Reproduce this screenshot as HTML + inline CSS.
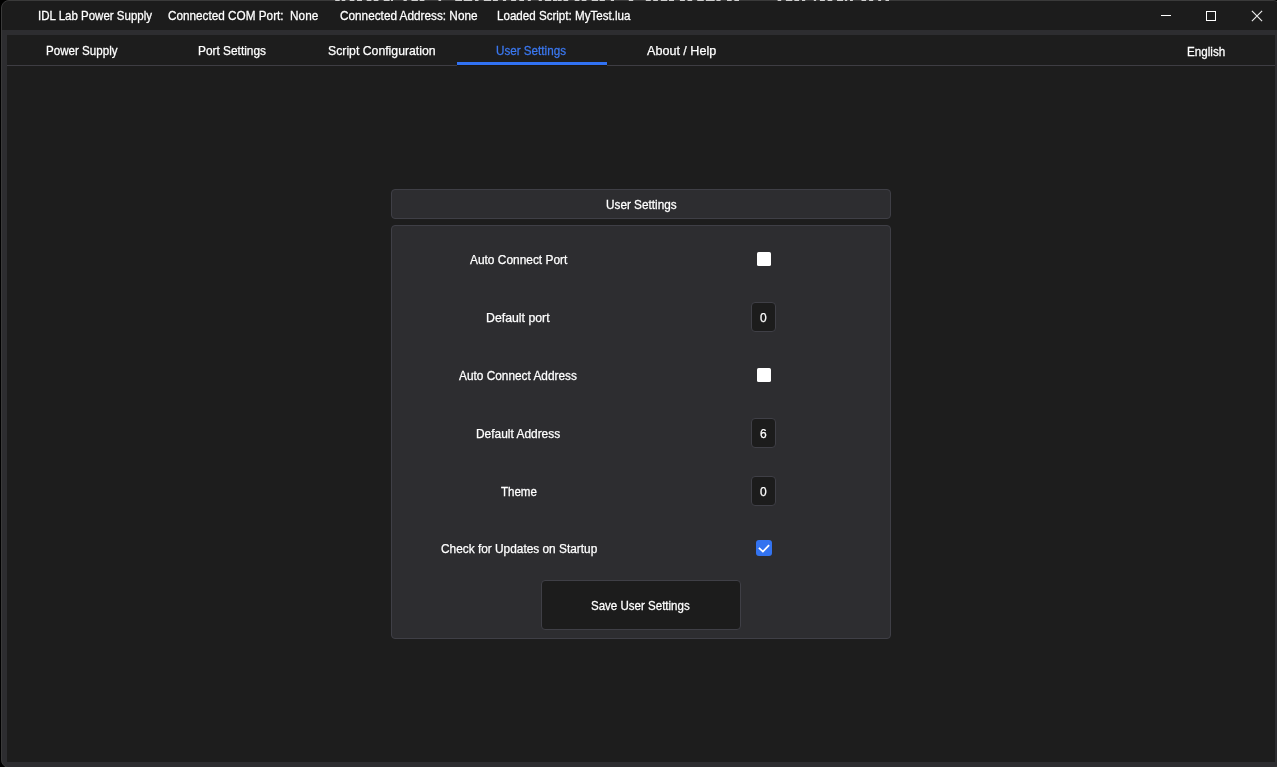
<!DOCTYPE html>
<html><head><meta charset="utf-8">
<style>
html,body{margin:0;padding:0;width:1277px;height:767px;overflow:hidden;background:#000;}
body{position:relative;font-family:"Liberation Sans",sans-serif;font-size:12px;color:#f2f2f2;}
.a{position:absolute;}
.t{position:absolute;white-space:pre;line-height:14px;height:14px;will-change:transform;transform-origin:0 11px;-webkit-text-stroke:0.25px currentColor;}
#win{left:1px;top:0;width:1280px;height:768px;box-sizing:border-box;border:1px solid #3a3a3a;border-radius:8px;background:#2d2d30;overflow:hidden;}
#title{left:0;top:0;width:1290px;height:29px;background:#1c1c1c;}
#content{left:5px;top:34px;width:1268px;height:727px;background:#1d1d1d;}
#sep{left:7px;top:65px;width:1268px;height:1px;background:#3e3d43;}
#uline{left:457px;top:62px;width:150px;height:3px;background:#3172f3;}
#uline2{left:457px;top:65px;width:150px;height:1px;background:#1a1815;}
.box{background:#2d2d30;border:1px solid #3f3f46;border-radius:4px;box-sizing:border-box;}
.inp{background:#1c1c1c;border:1px solid #3f3f46;border-radius:4px;box-sizing:border-box;}
.chk{background:#fff;border-radius:1.6px;}
</style></head><body>
<div id="win" class="a">
  <div id="title" class="a"></div>
  <div id="content" class="a"></div>
</div>
<div id="sep" class="a"></div>
<div id="uline" class="a"></div>
<div id="uline2" class="a"></div>

<svg class="a" style="left:1150px;top:0" width="127" height="30" viewBox="1150 0 127 30">
  <line x1="1161" y1="15.5" x2="1171" y2="15.5" stroke="#fff" stroke-width="1"/>
  <rect x="1206.5" y="11.5" width="9" height="9" fill="none" stroke="#fff" stroke-width="1"/>
  <path d="M1251.9 10.9 L1262.1 21.1 M1262.1 10.9 L1251.9 21.1" stroke="#fff" stroke-width="1.15" stroke-opacity="0.92"/>
</svg>

<div class="a box" style="left:391px;top:189px;width:500px;height:30px;"></div>
<div class="a box" style="left:391px;top:225px;width:500px;height:414px;"></div>

<div class="a chk" style="left:757px;top:252px;width:14px;height:14px;"></div>
<div class="a inp" style="left:751px;top:302px;width:25px;height:30px;"></div>
<div class="a chk" style="left:757px;top:368px;width:14px;height:14px;"></div>
<div class="a inp" style="left:751px;top:418px;width:25px;height:30px;"></div>
<div class="a inp" style="left:751px;top:476px;width:25px;height:30px;"></div>
<div class="a" style="left:756px;top:540px;width:16px;height:16px;background:#3373f0;border-radius:3px;"></div>
<svg class="a" style="left:756px;top:540px" width="16" height="16" viewBox="0 0 16 16"><path d="M2.9 7.9 L6.9 11.6 L13.1 5.2" fill="none" stroke="#fff" stroke-width="1.8"/></svg>
<div class="a inp" style="left:541px;top:580px;width:200px;height:50px;"></div>

<svg class="a" style="left:0;top:0" width="1277" height="2" viewBox="0 0 1277 2"><g fill="#cfcfcf"><rect x="335.2" y="0" width="4.5" height="1"/><rect x="341.7" y="0" width="3.6" height="1"/><rect x="349.7" y="0" width="4.7" height="1"/><rect x="357.0" y="0" width="5.0" height="1"/><rect x="366.7" y="0" width="4.7" height="1"/><rect x="373.7" y="0" width="4.7" height="1"/><rect x="383.7" y="0" width="5.9" height="1"/><rect x="391.0" y="0" width="2.0" height="1"/><rect x="403.5" y="0" width="3.3" height="1"/><rect x="411.5" y="0" width="6.4" height="1"/><rect x="419.7" y="0" width="4.7" height="1"/><rect x="438.5" y="0" width="2.6" height="1"/><rect x="455.2" y="0" width="6.8" height="1"/><rect x="463.7" y="0" width="8.5" height="1"/><rect x="475.0" y="0" width="3.5" height="1"/><rect x="483.8" y="0" width="7.3" height="1"/><rect x="492.9" y="0" width="5.0" height="1"/><rect x="502.9" y="0" width="3.2" height="1"/><rect x="511.1" y="0" width="5.0" height="1"/><rect x="519.3" y="0" width="4.7" height="1"/><rect x="527.8" y="0" width="3.0" height="1"/><rect x="538.7" y="0" width="3.2" height="1"/><rect x="544.9" y="0" width="6.3" height="1"/><rect x="553.0" y="0" width="4.0" height="1"/><rect x="557.6" y="0" width="4.1" height="1"/><rect x="563.5" y="0" width="4.7" height="1"/><rect x="574.7" y="0" width="4.7" height="1"/><rect x="581.7" y="0" width="4.7" height="1"/><rect x="591.7" y="0" width="6.4" height="1"/><rect x="599.6" y="0" width="5.3" height="1"/><rect x="610.8" y="0" width="3.2" height="1"/><rect x="628.8" y="0" width="4.4" height="1"/><rect x="645.8" y="0" width="5.0" height="1"/><rect x="653.2" y="0" width="4.7" height="1"/><rect x="660.8" y="0" width="6.5" height="1"/><rect x="669.0" y="0" width="5.0" height="1"/><rect x="679.9" y="0" width="5.0" height="1"/><rect x="687.5" y="0" width="4.7" height="1"/><rect x="697.2" y="0" width="6.6" height="1"/><rect x="705.9" y="0" width="8.8" height="1"/><rect x="716.4" y="0" width="4.2" height="1"/><rect x="727.0" y="0" width="4.7" height="1"/><rect x="734.4" y="0" width="4.6" height="1"/><rect x="777.6" y="0" width="3.6" height="1"/><rect x="785.9" y="0" width="6.4" height="1"/><rect x="794.4" y="0" width="4.7" height="1"/><rect x="802.0" y="0" width="3.2" height="1"/><rect x="813.8" y="0" width="2.3" height="1"/><rect x="819.9" y="0" width="5.0" height="1"/><rect x="827.6" y="0" width="4.7" height="1"/><rect x="837.0" y="0" width="6.1" height="1"/><rect x="844.9" y="0" width="2.3" height="1"/><rect x="850.0" y="0" width="2.9" height="1"/><rect x="861.5" y="0" width="4.6" height="1"/><rect x="869.1" y="0" width="4.1" height="1"/><rect x="878.2" y="0" width="2.9" height="1"/><rect x="885.5" y="0" width="3.5" height="1"/></g></svg>
<div class="t" style="left:37.50px;top:9.00px;font-size:11.511px;color:#ffffff;transform:scaleY(1.0468)">IDL Lab Power Supply</div>
<div class="t" style="left:168.34px;top:9.00px;font-size:11.762px;color:#ffffff;transform:scaleY(1.0245)">Connected COM Port:  None</div>
<div class="t" style="left:339.68px;top:9.00px;font-size:11.795px;color:#ffffff;transform:scaleY(1.0216)">Connected Address: None</div>
<div class="t" style="left:496.96px;top:9.00px;font-size:11.608px;color:#ffffff;transform:scaleY(1.0381)">Loaded Script: MyTest.lua</div>
<div class="t" style="left:45.50px;top:44.00px;font-size:11.606px;color:#ffffff;transform:scaleY(1.0383)">Power Supply</div>
<div class="t" style="left:198.08px;top:44.00px;font-size:11.887px;color:#ffffff">Port Settings</div>
<div class="t" style="left:327.58px;top:44.00px;font-size:12.260px;color:#ffffff">Script Configuration</div>
<div class="t" style="left:496.44px;top:44.00px;font-size:11.677px;color:#3b78f0;transform:scaleY(1.0320)">User Settings</div>
<div class="t" style="left:646.80px;top:44.00px;font-size:12.584px;color:#ffffff">About / Help</div>
<div class="t" style="left:1186.96px;top:45.00px;font-size:11.656px;color:#ffffff;transform:scaleY(1.0338)">English</div>
<div class="t" style="left:605.50px;top:198.00px;font-size:11.788px;color:#ffffff;transform:scaleY(1.0222)">User Settings</div>
<div class="t" style="left:470.22px;top:253.00px;font-size:11.923px;color:#ffffff">Auto Connect Port</div>
<div class="t" style="left:485.54px;top:311.00px;font-size:12.314px;color:#ffffff">Default port</div>
<div class="t" style="left:459.26px;top:369.00px;font-size:11.855px;color:#ffffff;transform:scaleY(1.0164)">Auto Connect Address</div>
<div class="t" style="left:475.92px;top:427.00px;font-size:11.932px;color:#ffffff">Default Address</div>
<div class="t" style="left:500.68px;top:485.00px;font-size:11.541px;color:#ffffff;transform:scaleY(1.0441)">Theme</div>
<div class="t" style="left:440.64px;top:542.00px;font-size:11.867px;color:#ffffff">Check for Updates on Startup</div>
<div class="t" style="left:591.00px;top:599.00px;font-size:11.546px;color:#ffffff;transform:scaleY(1.0437)">Save User Settings</div>
<div class="t" style="left:759.76px;top:311.00px;font-size:12.000px;color:#ffffff">0</div>
<div class="t" style="left:759.76px;top:427.00px;font-size:12.000px;color:#ffffff">6</div>
<div class="t" style="left:759.76px;top:485.00px;font-size:12.000px;color:#ffffff">0</div>
</body></html>
